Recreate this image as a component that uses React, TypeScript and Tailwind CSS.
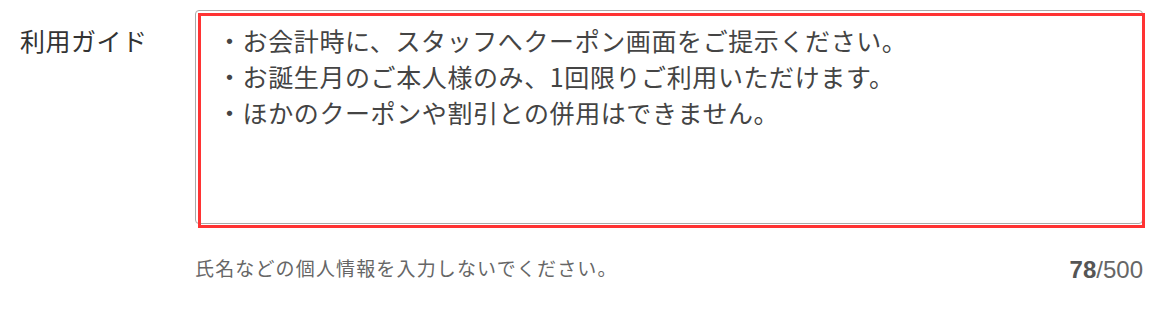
import React from 'react';

const GUIDE_TEXT = [
  '・お会計時に、スタッフへクーポン画面をご提示ください。',
  '・お誕生月のご本人様のみ、1回限りご利用いただけます。',
  '・ほかのクーポンや割引との併用はできません。',
].join('\n');

export default function App() {
  return (
    <div className="w-[1163px] h-[316px] bg-white px-5 pt-[10px] font-['Noto_Sans_CJK_JP','Noto_Sans',sans-serif]">
      <div className="flex">
        <label className="w-[175px] shrink-0 pt-[12px] text-[25px] leading-[36px] tracking-[0.5px] text-[#333]">
          利用ガイド
        </label>
        <div className="flex-1">
          <div className="relative">
            <textarea
              readOnly
              defaultValue={GUIDE_TEXT}
              className="block w-full h-[214px] resize-none rounded-[4px] border border-[#a9a9a9] bg-white pl-[21px] pr-4 pt-[11px] text-[25px] leading-[36px] tracking-[0.6px] text-[#444] outline-none"
            />
            {/* highlight frame */}
            <div className="pointer-events-none absolute top-[3px] left-[3px] right-[-2px] bottom-[-4px] border-[3px] border-[#ff3333]" />
          </div>
          <div className="mt-[30px] flex items-center justify-between">
            <p className="text-[19px] leading-6 tracking-[1.15px] text-[#666]">
              氏名などの個人情報を入力しないでください。
            </p>
            <p className="font-['Liberation_Sans',Arial,sans-serif] text-[24px] leading-6 text-[#666] mt-[4px]">
              <span className="font-bold text-[#555]">78</span>/500
            </p>
          </div>
        </div>
      </div>
    </div>
  );
}
